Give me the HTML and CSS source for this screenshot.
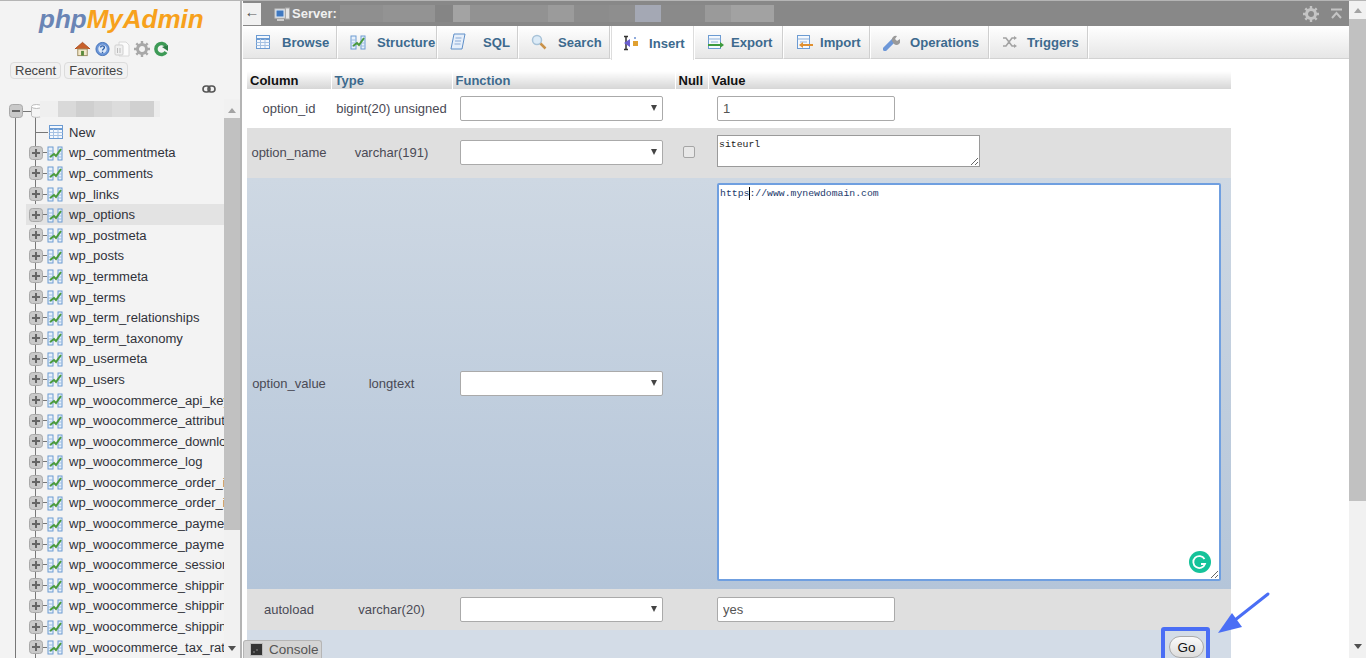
FILE: index.html
```html
<!DOCTYPE html>
<html lang="en">
<head>
<meta charset="utf-8">
<title>phpMyAdmin</title>
<link rel="stylesheet" href="styles.css">
</head>
<body>
<svg class="defs" width="0" height="0" aria-hidden="true">
  <symbol id="i-plus" viewBox="0 0 14 14"><rect x=".5" y=".5" width="13" height="13" rx="3" fill="#c9c9c9" stroke="#a9a9a9"/><path d="M3 7h8M7 3v8" stroke="#666" stroke-width="2"/></symbol>
  <symbol id="i-minus" viewBox="0 0 14 14"><rect x=".5" y=".5" width="13" height="13" rx="3" fill="#c9c9c9" stroke="#a9a9a9"/><path d="M3 7h8" stroke="#666" stroke-width="2"/></symbol>
  <symbol id="i-table" viewBox="0 0 16 16"><rect x="1" y="2" width="5" height="13" fill="#e8f1fb" stroke="#6c9bd2"/><rect x="11" y="2" width="4" height="13" fill="#e8f1fb" stroke="#6c9bd2"/><path d="M1 6h5M1 9h5M1 12h5M11 6h4M11 9h4M11 12h4" stroke="#9dbde2"/><path d="M3 12l4-3 2 2 5-7" fill="none" stroke="#4a9a3c" stroke-width="2"/></symbol>
  <symbol id="i-grid" viewBox="0 0 16 16"><rect x="1.500" y="1.500" width="13" height="13" fill="#f4f8fd" stroke="#6c9bd2"/><path d="M1.500 5h13" stroke="#6c9bd2" stroke-width="2"/><path d="M1.500 8.500h13M1.500 11.500h13M5.500 5v9M10 5v9" stroke="#a5c1e3"/></symbol>
  <symbol id="i-gear" viewBox="0 0 16 16"><circle cx="8" cy="8" r="4.500" fill="none" stroke="currentColor" stroke-width="3"/><path d="M8 0v3M8 13v3M0 8h3M13 8h3M2.300 2.300l2.200 2.200M11.500 11.500l2.200 2.200M13.700 2.300l-2.200 2.200M4.500 11.500l-2.200 2.200" stroke="currentColor" stroke-width="2.400"/></symbol>
</svg>

<aside class="sidebar">
  <div class="logo"><span class="logo-php">php</span><span class="logo-my">MyAdmin</span></div>
  <div class="quick">
    <svg width="17" height="16" viewBox="0 0 18 16"><path d="M1 8l8-7 8 7" fill="#c8602a" stroke="#a84a1c"/><rect x="4" y="8" width="10" height="7" fill="#f3e7c9" stroke="#9a8a60"/><rect x="7.500" y="10" width="3" height="5" fill="#5a8a3c"/></svg>
    <svg width="15" height="16" viewBox="0 0 16 16"><circle cx="8" cy="8" r="7" fill="#6d97d8" stroke="#3f6fb8"/><circle cx="8" cy="8" r="4.500" fill="#dce8f8"/><path d="M6 6.500c0-2.500 4-2.500 4 0 0 1.500-2 1.500-2 3M8 11v1.500" fill="none" stroke="#2f5fa8" stroke-width="1.500"/></svg>
    <svg width="16" height="16" viewBox="0 0 16 16"><path d="M5 1h7l3 3v11H5z" fill="#fbfbfb" stroke="#d8d8d8"/><rect x="1" y="4" width="8" height="10" rx="1" fill="#f0f0f0" stroke="#cfcfcf"/><path d="M3.500 7v5M6 7v5" stroke="#bbb"/></svg>
    <svg class="gear-side" width="16" height="16"><use href="#i-gear"/></svg>
    <svg width="14" height="16" viewBox="0 0 14 16"><path d="M12 5a5.500 5.500 0 1 0 0 6" fill="none" stroke="#3d9a56" stroke-width="3.500"/><path d="M8 6l6-2v6z" fill="#2e7d46"/></svg>
  </div>
  <div class="recent-row">
    <button class="pill">Recent</button>
    <button class="pill">Favorites</button>
  </div>
  <div class="link-row">
    <svg width="14" height="8" viewBox="0 0 14 8"><rect x="1" y="1" width="7" height="6" rx="3" fill="none" stroke="#555" stroke-width="1.600"/><rect x="6" y="1" width="7" height="6" rx="3" fill="none" stroke="#555" stroke-width="1.600"/></svg>
  </div>
  <div class="tree-wrap">
    <div class="tree">
      <span class="vline vline-a"></span>
      <span class="vline vline-b"></span>
      <div class="db-row">
        <svg class="tw" width="14" height="14"><use href="#i-minus"/></svg>
        <span class="hdash"></span>
        <svg width="11" height="14" viewBox="0 0 11 14"><path d="M.5 2.500v9c0 2.500 10 2.500 10 0v-9" fill="#f4f4f4" stroke="#bbb"/><ellipse cx="5.500" cy="2.500" rx="5" ry="2" fill="#fff" stroke="#bbb"/></svg>
        <span class="redact redact-db"></span>
      </div>
      <div class="row new-row"><span class="hline"></span><svg width="16" height="16"><use href="#i-grid"/></svg><span class="name name-new">New</span></div>
      <div class="row"><svg width="14" height="14"><use href="#i-plus"/></svg><span class="dash"></span><svg width="16" height="16"><use href="#i-table"/></svg><span class="name">wp_commentmeta</span></div>
      <div class="row"><svg width="14" height="14"><use href="#i-plus"/></svg><span class="dash"></span><svg width="16" height="16"><use href="#i-table"/></svg><span class="name">wp_comments</span></div>
      <div class="row"><svg width="14" height="14"><use href="#i-plus"/></svg><span class="dash"></span><svg width="16" height="16"><use href="#i-table"/></svg><span class="name">wp_links</span></div>
      <div class="row selected"><svg width="14" height="14"><use href="#i-plus"/></svg><span class="dash"></span><svg width="16" height="16"><use href="#i-table"/></svg><span class="name">wp_options</span></div>
      <div class="row"><svg width="14" height="14"><use href="#i-plus"/></svg><span class="dash"></span><svg width="16" height="16"><use href="#i-table"/></svg><span class="name">wp_postmeta</span></div>
      <div class="row"><svg width="14" height="14"><use href="#i-plus"/></svg><span class="dash"></span><svg width="16" height="16"><use href="#i-table"/></svg><span class="name">wp_posts</span></div>
      <div class="row"><svg width="14" height="14"><use href="#i-plus"/></svg><span class="dash"></span><svg width="16" height="16"><use href="#i-table"/></svg><span class="name">wp_termmeta</span></div>
      <div class="row"><svg width="14" height="14"><use href="#i-plus"/></svg><span class="dash"></span><svg width="16" height="16"><use href="#i-table"/></svg><span class="name">wp_terms</span></div>
      <div class="row"><svg width="14" height="14"><use href="#i-plus"/></svg><span class="dash"></span><svg width="16" height="16"><use href="#i-table"/></svg><span class="name">wp_term_relationships</span></div>
      <div class="row"><svg width="14" height="14"><use href="#i-plus"/></svg><span class="dash"></span><svg width="16" height="16"><use href="#i-table"/></svg><span class="name">wp_term_taxonomy</span></div>
      <div class="row"><svg width="14" height="14"><use href="#i-plus"/></svg><span class="dash"></span><svg width="16" height="16"><use href="#i-table"/></svg><span class="name">wp_usermeta</span></div>
      <div class="row"><svg width="14" height="14"><use href="#i-plus"/></svg><span class="dash"></span><svg width="16" height="16"><use href="#i-table"/></svg><span class="name">wp_users</span></div>
      <div class="row"><svg width="14" height="14"><use href="#i-plus"/></svg><span class="dash"></span><svg width="16" height="16"><use href="#i-table"/></svg><span class="name">wp_woocommerce_api_keys</span></div>
      <div class="row"><svg width="14" height="14"><use href="#i-plus"/></svg><span class="dash"></span><svg width="16" height="16"><use href="#i-table"/></svg><span class="name">wp_woocommerce_attribute_taxonomies</span></div>
      <div class="row"><svg width="14" height="14"><use href="#i-plus"/></svg><span class="dash"></span><svg width="16" height="16"><use href="#i-table"/></svg><span class="name">wp_woocommerce_downloadable_product_permissions</span></div>
      <div class="row"><svg width="14" height="14"><use href="#i-plus"/></svg><span class="dash"></span><svg width="16" height="16"><use href="#i-table"/></svg><span class="name">wp_woocommerce_log</span></div>
      <div class="row"><svg width="14" height="14"><use href="#i-plus"/></svg><span class="dash"></span><svg width="16" height="16"><use href="#i-table"/></svg><span class="name">wp_woocommerce_order_items</span></div>
      <div class="row"><svg width="14" height="14"><use href="#i-plus"/></svg><span class="dash"></span><svg width="16" height="16"><use href="#i-table"/></svg><span class="name">wp_woocommerce_order_itemmeta</span></div>
      <div class="row"><svg width="14" height="14"><use href="#i-plus"/></svg><span class="dash"></span><svg width="16" height="16"><use href="#i-table"/></svg><span class="name">wp_woocommerce_payment_tokens</span></div>
      <div class="row"><svg width="14" height="14"><use href="#i-plus"/></svg><span class="dash"></span><svg width="16" height="16"><use href="#i-table"/></svg><span class="name">wp_woocommerce_payment_tokenmeta</span></div>
      <div class="row"><svg width="14" height="14"><use href="#i-plus"/></svg><span class="dash"></span><svg width="16" height="16"><use href="#i-table"/></svg><span class="name">wp_woocommerce_sessions</span></div>
      <div class="row"><svg width="14" height="14"><use href="#i-plus"/></svg><span class="dash"></span><svg width="16" height="16"><use href="#i-table"/></svg><span class="name">wp_woocommerce_shipping_zones</span></div>
      <div class="row"><svg width="14" height="14"><use href="#i-plus"/></svg><span class="dash"></span><svg width="16" height="16"><use href="#i-table"/></svg><span class="name">wp_woocommerce_shipping_zone_locations</span></div>
      <div class="row"><svg width="14" height="14"><use href="#i-plus"/></svg><span class="dash"></span><svg width="16" height="16"><use href="#i-table"/></svg><span class="name">wp_woocommerce_shipping_zone_methods</span></div>
      <div class="row"><svg width="14" height="14"><use href="#i-plus"/></svg><span class="dash"></span><svg width="16" height="16"><use href="#i-table"/></svg><span class="name">wp_woocommerce_tax_rates</span></div>
    </div>
    <div class="scrollbar scrollbar-side">
      <span class="arrow-up"></span>
      <span class="thumb thumb-side"></span>
      <span class="arrow-down"></span>
    </div>
  </div>
</aside>
<div class="divider"></div>

<main class="main">
  <div class="topbar">
    <button class="back">&#8592;</button>
    <svg class="server-ico" width="16" height="16" viewBox="0 0 16 16"><rect x="1" y="3" width="10" height="9" fill="#dfe8f2" stroke="#c8c8c8"/><rect x="2.500" y="4.500" width="7" height="6" fill="#3f78c0"/><rect x="11.500" y="2" width="4" height="11" fill="#e6e6e6" stroke="#aaa"/><path d="M3 14h7" stroke="#ccc" stroke-width="2"/></svg>
    <span class="server-label">Server:</span>
    <span class="redact redact-server"></span>
    <span class="top-spacer"></span>
    <svg class="top-gear" width="16" height="16"><use href="#i-gear"/></svg>
    <svg class="top-collapse" width="13" height="12" viewBox="0 0 13 12"><path d="M1 1.500h11M2 10l4.500-5 4.500 5" fill="none" stroke="#c4c4c4" stroke-width="2"/></svg>
  </div>
  <nav class="tabs">
    <a class="tab tab-browse"><svg width="16" height="16"><use href="#i-grid"/></svg><span>Browse</span></a>
    <a class="tab tab-structure"><svg width="16" height="16"><use href="#i-table"/></svg><span>Structure</span></a>
    <a class="tab tab-sql"><svg width="16" height="18" viewBox="0 0 16 18"><path d="M4 1h11l-3 15H1z" fill="#e6effa" stroke="#5f8fc8"/><path d="M5.500 5h6M5 8h6M4.500 11h6" stroke="#88a9d6"/></svg><span>SQL</span></a>
    <a class="tab tab-search"><svg width="16" height="16" viewBox="0 0 16 16"><circle cx="6" cy="6" r="4.500" fill="#dcebf7" stroke="#a8c3d8" stroke-width="1.500"/><path d="M9.500 9.500l5 5" stroke="#c9924a" stroke-width="2.500"/></svg><span>Search</span></a>
    <a class="tab tab-insert active"><svg width="16" height="16" viewBox="0 0 16 16"><path d="M1 1.500h4M1 14.500h4M3 1.500v13" stroke="#333" stroke-width="1.500"/><path d="M1 8l6-4v8z" fill="#6a5fd0"/><rect x="10" y="6" width="5" height="5" fill="#e0a030"/><path d="M12 2v2" stroke="#6a8fd0" stroke-width="1.500"/></svg><span>Insert</span></a>
    <a class="tab tab-export"><svg width="17" height="16" viewBox="0 0 17 16"><rect x="1.500" y="1.500" width="12" height="13" fill="#f4f8fd" stroke="#6c9bd2"/><path d="M1.500 5h12M4 8h7" stroke="#8fb1da"/><path d="M1 11h12" stroke="#3d9a3d" stroke-width="2"/><path d="M13 8l4 3-4 3z" fill="#3d9a3d"/></svg><span>Export</span></a>
    <a class="tab tab-import"><svg width="17" height="16" viewBox="0 0 17 16"><rect x="1.500" y="1.500" width="12" height="13" fill="#f4f8fd" stroke="#6c9bd2"/><path d="M1.500 5h12M4 8h7" stroke="#8fb1da"/><path d="M6 11h11" stroke="#e09030" stroke-width="2"/><path d="M7 8l-4 3 4 3z" fill="#e09030"/></svg><span>Import</span></a>
    <a class="tab tab-ops"><svg width="17" height="17" viewBox="0 0 17 17"><path d="M2 15l8-8" stroke="#6d97d8" stroke-width="4.500" stroke-linecap="round"/><path d="M9 7a4 4 0 0 1 5-5l-2 3 2 2 3-2a4 4 0 0 1-6 5z" fill="#9a9a9a"/></svg><span>Operations</span></a>
    <a class="tab tab-triggers"><svg width="16" height="14" viewBox="0 0 16 14"><path d="M1 3h3l6 8h3M1 11h3l6-8h3" fill="none" stroke="#a3a3a3" stroke-width="1.600"/><path d="M12 1l3 2-3 2zM12 9l3 2-3 2z" fill="#a3a3a3"/></svg><span>Triggers</span></a>
    <span class="tab-fill"></span>
  </nav>
  <div class="content">
    <table class="insert">
      <thead>
        <tr><th class="c-col">Column</th><th class="c-type">Type</th><th class="c-fn">Function</th><th class="c-null">Null</th><th class="c-val">Value</th></tr>
      </thead>
      <tbody>
        <tr class="r1"><td class="center">option_id</td><td class="center">bigint(20) unsigned</td><td><span class="sel"><select></select></span></td><td></td><td class="val"><input class="txt" value="1"></td></tr>
        <tr class="r2"><td class="center">option_name</td><td class="center">varchar(191)</td><td><span class="sel"><select></select></span></td><td class="center"><input class="chk" type="checkbox"></td><td class="val"><textarea class="ta-small">siteurl</textarea></td></tr>
        <tr class="r3"><td class="center">option_value</td><td class="center">longtext</td><td><span class="sel"><select></select></span></td><td></td><td class="val"><div class="ta-wrap"><textarea class="ta-big">https://www.mynewdomain.com</textarea><span class="caret"></span><svg class="grammarly" width="22" height="22" viewBox="0 0 22 22"><circle cx="11" cy="11" r="11" fill="#15c39a"/><path d="M15.500 8a6 6 0 1 0 .5 5h-4" fill="none" stroke="#fff" stroke-width="1.800"/></svg></div></td></tr>
        <tr class="r4"><td class="center">autoload</td><td class="center">varchar(20)</td><td><span class="sel"><select></select></span></td><td></td><td class="val"><input class="txt" value="yes"></td></tr>
        <tr class="r5"><td colspan="5" class="actions"><button class="go">Go</button></td></tr>
      </tbody>
    </table>
  </div>
  <div class="console"><svg width="13" height="13" viewBox="0 0 13 13"><rect x=".5" y=".5" width="12" height="12" fill="#333" stroke="#bbb"/><path d="M3 9h2M6 7h2" stroke="#888"/></svg><span>Console</span></div>
  <div class="highlight"></div>
  <svg class="pointer" width="62" height="46" viewBox="0 0 62 46"><path d="M50 3L17 29" stroke="#4a6ef5" stroke-width="3" stroke-linecap="round"/><path d="M0 42l14-20 10 14z" fill="#4a6ef5"/></svg>
</main>

<div class="scrollbar scrollbar-main">
  <span class="arrow-up"></span>
  <span class="thumb thumb-main"></span>
  <span class="arrow-down"></span>
</div>
</body>
</html>
```

FILE: styles.css
```css
* { box-sizing: border-box; }
html, body { margin: 0; height: 100%; overflow: hidden; }
body {
  display: flex;
  width: 1366px;
  height: 658px;
  font-family: "Liberation Sans", Arial, sans-serif;
  font-size: 13px;
  color: #444;
  background: #fff;
  border-top: 1px solid #b5b5b5;
}
.defs { position: absolute; }

/* Sidebar */
.sidebar { width: 240px; flex: none; background: #f3f3f3; display: flex; flex-direction: column; }
.divider { width: 3px; flex: none; background: #b4b4b4; border-right: 1px solid #fff; }
.logo { height: 36px; padding: 3px 0 0 39px; font-size: 26px; line-height: 30px; font-style: italic; font-weight: 700; white-space: nowrap; }
.logo-php { color: #6a85b5; }
.logo-my { color: #f7a11c; }
.quick { height: 20px; margin-top: 2px; display: flex; align-items: center; gap: 4px; padding-left: 74px; }
.gear-side { color: #a8a8a8; }
.recent-row { display: flex; gap: 3px; padding-left: 10px; margin-top: 3px; }
.pill { height: 17px; padding: 0 4px; font: 13px/15px "Liberation Sans", Arial, sans-serif; color: #444; background: #f1f1f1; border: 1px solid #dcdcdc; border-radius: 4px; }
.recent-row .pill:first-child { width: 51px; }
.recent-row .pill:last-child { width: 64px; }
.link-row { height: 20px; display: flex; justify-content: flex-end; align-items: center; padding: 0 24px 0 0; }
.tree-wrap { flex: 1; min-height: 0; display: flex; }
.tree { position: relative; width: 224px; flex: none; overflow: hidden; padding-top: 3px; }
.vline { position: absolute; width: 1px; background: #777; bottom: 0; }
.vline-a { left: 15px; top: 18px; }
.vline-b { left: 35px; top: 18px; }
.db-row { position: relative; height: 20px; display: flex; align-items: center; padding: 0 0 2px 9px; }
.hdash { width: 8px; height: 1px; background: #777; }
.redact { display: block; }
.redact-db { position: absolute; left: 40px; top: -1px; width: 120px; height: 16px;
  background: linear-gradient(90deg,#efefef 0 15%,#d9d9d9 15% 30%,#cfcfcf 30% 45%,#d6d6d6 45% 60%,#dcdcdc 60% 75%,#d0d0d0 75% 95%,#ececec 95%); }
.row { position: relative; height: 20.600px; display: flex; align-items: center; padding-left: 29px; white-space: nowrap; font-size: 13.050px; color: #333; }
.row.selected { background: #e3e3e3; margin-left: 26px; padding-left: 3px; }
.dash { width: 4px; height: 1px; background: #777; flex: none; }
.row svg { flex: none; position: relative; }
.name { position: relative; margin-left: 6px; color: #30323a; }
.new-row { padding-left: 48px; }
.name-new { margin-left: 5px; }
.hline { position: absolute; left: 35px; top: 10px; width: 13px; height: 1px; background: #777; }

/* Scrollbars */
.scrollbar { background: #f1f1f1; display: flex; flex-direction: column; align-items: center; flex: none; }
.scrollbar-side { width: 16px; padding-top: 9px; }
.scrollbar-main { width: 17px; padding-top: 7px; }
.arrow-up { width: 0; height: 0; border: 4px solid transparent; border-top: 0; border-bottom: 5px solid #a3a3a3; flex: none; }
.arrow-down { width: 0; height: 0; border: 4px solid transparent; border-bottom: 0; border-top: 5px solid #505050; flex: none; }
.thumb { width: 100%; background: #c1c1c1; flex: none; }
.thumb-side { height: 412px; margin-top: 5px; margin-bottom: 116px; }
.thumb-main { height: 482px; margin-top: 6px; margin-bottom: 143px; }

/* Main */
.main { position: relative; flex: 1; min-width: 0; display: flex; flex-direction: column; }
.topbar { height: 25px; flex: none; background: #888; display: flex; align-items: center; color: #fff; }
.back { width: 18px; height: 22px; margin: 0; padding: 0 0 4px; border: 0; background: #f1f1f1; font: 15px/18px "Liberation Sans", Arial, sans-serif; color: #555; }
.server-ico { margin-left: 13px; }
.server-label { margin-left: 2px; font-size: 13px; font-weight: 700; color: #f0f0f0; }
.redact-server { margin-left: 3px; width: 434px; height: 17px;
  background: linear-gradient(90deg,#8f8f8f 0 10%,#939393 10% 22%,#858585 22% 26%,#a3a3a3 26% 30%,#929292 30% 48%,#9b9b9b 48% 54%,#8c8c8c 54% 62%,#8e8e8e 62% 68%,#a4a8b4 68% 74%,#8a8a8a 74% 84%,#9a9a9a 84% 90%,#a2a2a2 90% 100%); }
.top-spacer { flex: 1; }
.top-gear { color: #c4c4c4; margin-right: 11px; }
.top-collapse { margin-right: 6px; }

.tabs { height: 34px; flex: none; display: flex; background: #fff; }
.tab { display: flex; align-items: center; height: 33px; gap: 11px; padding-left: 12px; font-size: 13.100px; font-weight: 700; color: #3d6a8e; white-space: nowrap; background: linear-gradient(#fff,#e6e6e6); border-right: 1px solid #fff; border-bottom: 1px solid #d2d2d2; box-shadow: inset -1px 0 0 #cfcfcf; }
.tab.active { height: 34px; background: #fff; color: #3d6a8e; border-bottom: 0; box-shadow: inset 1px 0 0 #ddd, inset -1px 0 0 #ddd; }
.tab-browse { width: 95px; }
.tab-structure { width: 100px; }
.tab-sql { width: 81px; gap: 17px; }
.tab-search { width: 92px; }
.tab-insert { width: 84px; gap: 10px; }
.tab-export { width: 89px; gap: 7px; }
.tab-import { width: 87px; gap: 7px; }
.tab-ops { width: 119px; gap: 10px; }
.tab-triggers { width: 99px; gap: 9px; }
.tab-fill { flex: 1; height: 33px; background: linear-gradient(#fff,#e6e6e6); border-bottom: 1px solid #d2d2d2; }

.content { flex: 1; min-height: 0; overflow: hidden; padding: 11px 0 0 4px; }
.insert { table-layout: fixed; width: 984px; border-collapse: collapse; }
.insert th { height: 18px; padding: 2px 0 0 3px; text-align: left; font-size: 13px; font-weight: 700; line-height: 14px; background: linear-gradient(#fff,#d6d6d6); border-right: 1px solid #fff; color: #3d6a8e; }
.insert .c-col { width: 84px; color: #111; }
.insert .c-type { width: 121px; }
.insert .c-fn { width: 223px; }
.insert .c-null { width: 33px; color: #111; padding-left: 3px; }
.insert .c-val { color: #111; border-right: 0; }
.insert td { padding: 0; font-size: 13px; color: #4a4a55; vertical-align: middle; }
.center { text-align: center; }
.r1 td { height: 39px; background: #fff; }
.r2 td { height: 50px; padding-bottom: 2px; background: #dfdfdf; }
.r2 .val { padding-bottom: 4px; }
.r3 td { height: 411px; background: transparent; }
.r3 .val { padding-bottom: 4px; }
.r3 { background: linear-gradient(#ced8e3,#b4c5d9); }
.r4 td { height: 41px; background: #dfdfdf; }
.r5 td { height: 40px; background: #d3dce7; }
.sel { position: relative; display: block; width: 203px; height: 25px; margin-left: 8px; }
.sel select { appearance: none; display: block; width: 100%; height: 100%; background: #fff; border: 1px solid #aaa; border-radius: 2px; }
.sel::after { content: ""; position: absolute; right: 6px; top: 9px; border: 3.500px solid transparent; border-bottom: 0; border-top: 6px solid #444; }
.val { padding-left: 9px !important; }
.txt { display: block; width: 178px; height: 25px; padding: 0 5px; font: 13px "Liberation Sans", Arial, sans-serif; color: #555; background: #fff; border: 1px solid #aaa; border-radius: 2px; }
.chk { appearance: none; display: block; margin: 0 auto; width: 12px; height: 12px; background: #e8e8e8; border: 1px solid #a5a5a5; border-radius: 2px; transform: translateX(-3px); }
textarea { display: block; margin: 0; font: 9.800px/12px "Liberation Mono", monospace; color: #222; background: #fff; }
.ta-small { width: 263px; height: 32px; padding: 3px 2px 3px 1px; border: 1px solid #9a9a9a; }
.ta-wrap { position: relative; width: 504px; height: 398px; }
.ta-big { width: 100%; height: 100%; padding: 3px 2px 3px 1px; border: 2px solid #6f9fe0; border-radius: 2px; color: #1c3a6c; }
.caret { position: absolute; left: 32px; top: 4px; width: 1px; height: 13px; background: #000; }
.grammarly { position: absolute; right: 10px; bottom: 8px; }
.actions { position: relative; text-align: right; padding-right: 8px !important; vertical-align: top !important; }
.go { width: 35px; height: 22px; margin: 6px 19px 0 0; padding: 0; font: 13.500px "Liberation Sans", Arial, sans-serif; color: #111; background: linear-gradient(#fafafa,#dcdcdc); border: 1px solid #aaa; border-radius: 11px; }
.console { position: absolute; left: 0; bottom: 0; width: 79px; height: 18px; display: flex; align-items: center; gap: 6px; padding-left: 6px; font-size: 13.500px; color: #555; background: #d4d4d4; border: 1px solid #b5b5b5; border-bottom: 0; border-radius: 3px 3px 0 0; }
.highlight { position: absolute; left: 918px; top: 626px; width: 49px; height: 40px; border: 4px solid #4a6ef5; border-radius: 3px; }
.pointer { position: absolute; left: 975px; top: 590px; }
```
